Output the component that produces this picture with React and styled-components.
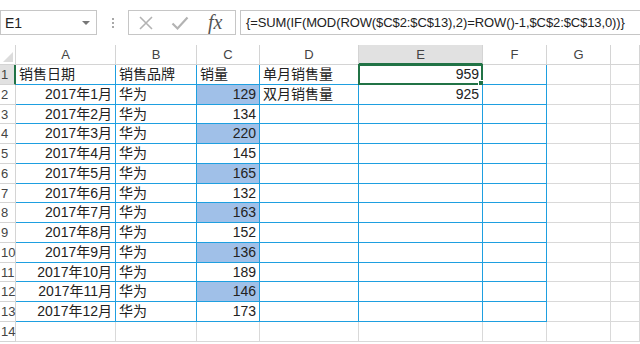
import React from 'react';
import styled, { createGlobalStyle } from 'styled-components';

const GlobalStyle = createGlobalStyle`
  html, body {
    margin: 0;
    padding: 0;
    background: #ffffff;
  }
  body {
    font-family: "Liberation Sans", "Noto Sans CJK SC", sans-serif;
    color: #222;
  }
`;

const Window = styled.div`
  width: 640px;
  height: 344px;
  overflow: hidden;
  background: #fff;
`;

const FormulaRow = styled.div`
  display: flex;
  align-items: stretch;
  height: 25px;
  padding-top: 10px;
`;

const NameBox = styled.div`
  box-sizing: border-box;
  width: 97px;
  border: 1px solid #c6c6c6;
  display: flex;
  align-items: center;
  justify-content: space-between;
  padding: 0 6px 0 4px;
  font-size: 14px;
`;

const Caret = styled.span`
  width: 0;
  height: 0;
  border-left: 4px solid transparent;
  border-right: 4px solid transparent;
  border-top: 4px solid #777;
`;

const Dots = styled.div`
  width: 31px;
  display: flex;
  flex-direction: column;
  align-items: center;
  justify-content: center;
  gap: 2px;

  span {
    width: 2px;
    height: 2px;
    background: #a8a8a8;
  }
`;

const FxBox = styled.div`
  box-sizing: border-box;
  width: 108px;
  border: 1px solid #c6c6c6;
  display: flex;
  align-items: center;
  padding: 0 8px 0 9px;
  gap: 17px;
`;

const Fx = styled.span`
  font-family: "Liberation Serif", serif;
  font-style: italic;
  font-size: 20px;
  color: #555;
  margin-left: 2px;
`;

const FormulaInput = styled.div`
  box-sizing: border-box;
  flex: 1;
  margin-left: 4px;
  border: 1px solid #c6c6c6;
  border-right: none;
  display: flex;
  align-items: center;
  padding-left: 5px;
  font-size: 13px;
  letter-spacing: -0.1px;
  white-space: nowrap;
  overflow: hidden;
`;

const Sheet = styled.div`
  margin-top: 10px;
  display: grid;
  grid-template-columns: 16px 100px 81px 63px 99px 124px 64px 64px 29px;
  grid-template-rows: 20px repeat(14, 19.77px);
`;

const Corner = styled.div`
  box-sizing: border-box;
  border-right: 1px solid #d4d4d4;
  border-bottom: 1px solid #d4d4d4;
  position: relative;

  &::after {
    content: '';
    position: absolute;
    right: 2px;
    bottom: 2px;
    width: 0;
    height: 0;
    border-left: 10px solid transparent;
    border-bottom: 10px solid #dcdcdc;
  }
`;

const ColHeader = styled.div`
  box-sizing: border-box;
  border-right: 1px solid #d4d4d4;
  border-bottom: ${p => (p.$active ? '2px solid #217346' : '1px solid #d4d4d4')};
  background: ${p => (p.$active ? '#e1e1e1' : '#fff')};
  display: flex;
  align-items: center;
  justify-content: center;
  font-size: 13px;
  color: #444;
`;

const RowHeader = styled.div`
  box-sizing: border-box;
  border-right: ${p => (p.$active ? '2px solid #217346' : '1px solid #d4d4d4')};
  border-bottom: 1px solid #d4d4d4;
  background: ${p => (p.$active ? '#e1e1e1' : '#fff')};
  font-size: 13px;
  line-height: 19px;
  padding-left: 1px;
  color: #444;
`;

const Cell = styled.div`
  box-sizing: border-box;
  position: relative;
  border-right: 1px solid ${p => (p.$table ? '#1e9fe0' : '#d9d9d9')};
  border-bottom: 1px solid ${p => (p.$table ? '#1e9fe0' : '#d9d9d9')};
  background: ${p => (p.$fill ? '#a0c0e8' : '#fff')};
  text-align: ${p => p.$align};
  padding: 0 3px;
  font-size: 14px;
  line-height: 19px;
  white-space: nowrap;
  overflow: visible;
`;

const Selection = styled.div`
  position: absolute;
  left: -1px;
  top: -1px;
  right: -1px;
  bottom: -1px;
  border: 2px solid #217346;
  pointer-events: none;

  &::after {
    content: '';
    position: absolute;
    right: -4px;
    bottom: -4px;
    width: 5px;
    height: 5px;
    background: #217346;
    border: 1px solid #fff;
  }
`;

const CellText = styled.span`
  position: relative;
`;

const columns = ['A', 'B', 'C', 'D', 'E', 'F', 'G', ''];
const sales = [129, 134, 220, 145, 165, 132, 163, 152, 136, 189, 146, 173];

const rows = [
  [
    { v: '销售日期' },
    { v: '销售品牌' },
    { v: '销量' },
    { v: '单月销售量' },
    { v: '959', right: true, selected: true },
  ],
  ...sales.map((n, i) => [
    { v: `2017年${i + 1}月`, right: true },
    { v: '华为' },
    { v: String(n), right: true, fill: i % 2 === 0 },
    i === 0 ? { v: '双月销售量' } : { v: '' },
    i === 0 ? { v: '925', right: true } : { v: '' },
  ]),
  [],
];

const XIcon = () => (
  <svg width="16" height="16" viewBox="0 0 16 16">
    <path d="M2 2 L14 14 M14 2 L2 14" stroke="#b3b3b3" strokeWidth="1.6" fill="none" />
  </svg>
);

const CheckIcon = () => (
  <svg width="18" height="16" viewBox="0 0 18 16">
    <path d="M1.5 8.5 L6.5 13.5 L16.5 2.5" stroke="#b3b3b3" strokeWidth="2.2" fill="none" />
  </svg>
);

export default function App() {
  return (
    <Window>
      <GlobalStyle />
      <FormulaRow>
        <NameBox>
          E1
          <Caret />
        </NameBox>
        <Dots>
          <span />
          <span />
          <span />
        </Dots>
        <FxBox>
          <XIcon />
          <CheckIcon />
          <Fx>fx</Fx>
        </FxBox>
        <FormulaInput>{'{=SUM(IF(MOD(ROW($C$2:$C$13),2)=ROW()-1,$C$2:$C$13,0))}'}</FormulaInput>
      </FormulaRow>

      <Sheet>
        <Corner />
        {columns.map((c, i) => (
          <ColHeader key={i} $active={c === 'E'}>{c}</ColHeader>
        ))}
        {rows.map((row, r) => (
          <React.Fragment key={r}>
            <RowHeader $active={r === 0}>{r + 1}</RowHeader>
            {columns.map((c, ci) => {
              const cell = row[ci] || { v: '' };
              const inTable = r < 13 && ci < 6;
              return (
                <Cell
                  key={ci}
                  $table={inTable}
                  $fill={cell.fill}
                  $align={cell.right ? 'right' : 'left'}
                >
                  <CellText>{cell.v}</CellText>
                  {cell.selected && <Selection />}
                </Cell>
              );
            })}
          </React.Fragment>
        ))}
      </Sheet>
    </Window>
  );
}
